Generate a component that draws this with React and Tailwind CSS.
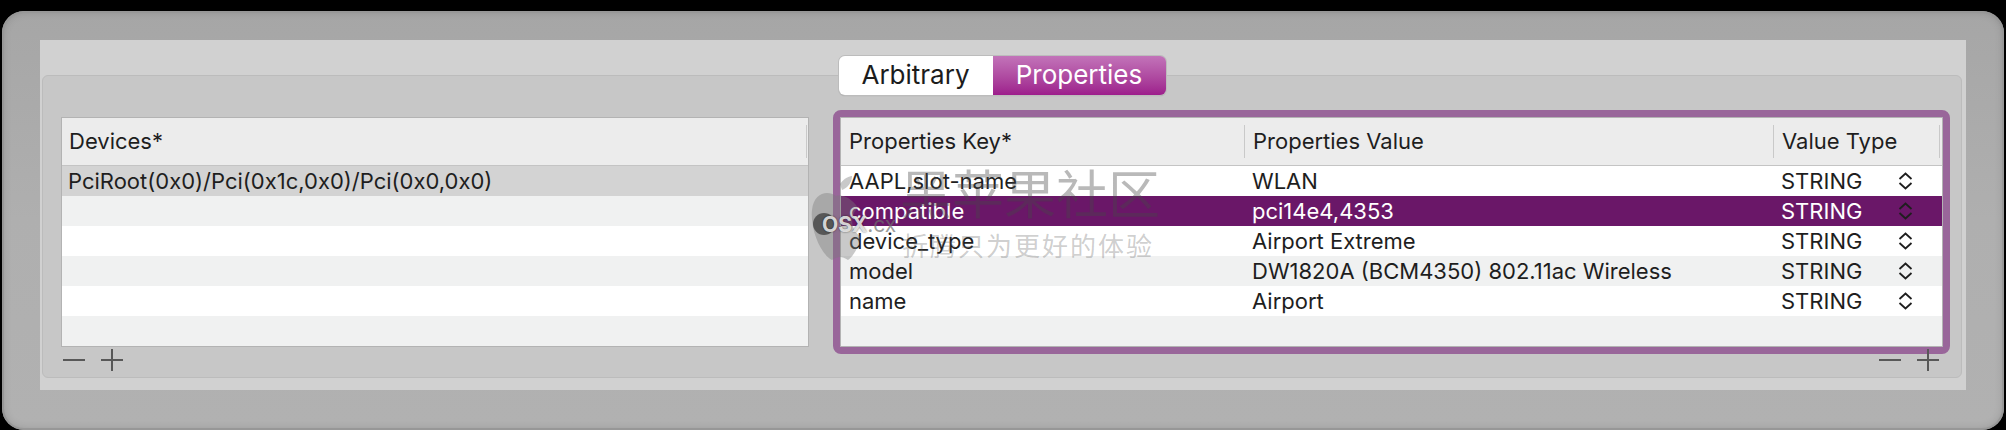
import React from 'react';

const DEVICES = ['PciRoot(0x0)/Pci(0x1c,0x0)/Pci(0x0,0x0)', '', '', '', '', ''];

const PROPS = [
    { key: 'AAPL,slot-name', value: 'WLAN', type: 'STRING' },
    { key: 'compatible', value: 'pci14e4,4353', type: 'STRING', selected: true },
    { key: 'device_type', value: 'Airport Extreme', type: 'STRING' },
    { key: 'model', value: 'DW1820A (BCM4350) 802.11ac Wireless', type: 'STRING' },
    { key: 'name', value: 'Airport', type: 'STRING' },
    null,
];

const Stepper = () => (
    <svg width="15" height="18" viewBox="0 0 15 18" className="shrink-0">
        <path d="M1.5 7 L7.5 1.5 L13.5 7 M1.5 11 L7.5 16.5 L13.5 11" fill="none" stroke="currentColor" strokeWidth="1.8" />
    </svg>
);

const AddRemove = ({ className = '' }) => (
    <div className={`flex h-[26px] items-center gap-[16px] ${className}`}>
        <svg width="22" height="22" viewBox="0 0 22 22">
            <path d="M0 11H22" stroke="#585858" strokeWidth="2" />
        </svg>
        <svg width="22" height="22" viewBox="0 0 22 22">
            <path d="M0 11H22 M11 0V22" stroke="#585858" strokeWidth="2" />
        </svg>
    </div>
);

const HeaderSep = () => <div className="h-[33px] w-px shrink-0 bg-[#c9c9c9]" />;

const App = () => {
    return (
        <div className="relative h-[430px] w-[2006px] overflow-hidden bg-black px-[2px] pt-[11px] font-['Inter',sans-serif] text-[#1e1e1e]">

            {/* ── window frame ── */}
            <div className="flex h-[419px] flex-col rounded-[22px] bg-gradient-to-b from-[#a6a6a6] via-[#afafaf] to-[#b1b1b1] px-[38px] pt-[29px] pb-[40px] shadow-[inset_0_0_0_2px_#979797,inset_0_0_10px_rgba(0,0,0,0.18)]">

                {/* ── inner panel ── */}
                <div className="flex flex-1 flex-col items-center bg-[#d1d1d1] pt-[16px] pb-[12px] pl-[2px] pr-[4px]">

                    {/* segmented control */}
                    <div className="relative z-10 flex h-[39px] overflow-hidden rounded-[6px] text-[26px] leading-none shadow-[0_0_0_1px_#bcbcbc,0_1px_1px_rgba(0,0,0,0.25)]">
                        <div className="flex w-[154px] items-center justify-center bg-white pb-[2px] text-[#1c1c1c]">Arbitrary</div>
                        <div className="flex w-[173px] items-center justify-center bg-gradient-to-b from-[#c273b9] to-[#9d1d8c] pb-[2px] text-white">Properties</div>
                    </div>

                    {/* tab box */}
                    <div className="-mt-[20px] flex w-full flex-1 flex-col rounded-[6px] border border-[#bcbcbc] bg-[#c7c7c7] px-[18px] pt-[41px] pb-[4px]">
                        <div className="flex gap-[31px]">

                            {/* devices */}
                            <div className="flex w-[748px] shrink-0 flex-col">
                                <div className="border border-[#b3b3b3] bg-white text-[22px]">
                                    <div className="flex h-[48px] items-center border-b border-[#c4c4c4] bg-[#ececec]">
                                        <span className="flex-1 pl-[7px]">Devices*</span>
                                        <HeaderSep />
                                        <div className="w-px" />
                                    </div>
                                    {DEVICES.map((d, i) => (
                                        <div
                                            key={i}
                                            className={`flex h-[30px] items-center pl-[6px] ${i === 0 ? 'bg-[#d3d3d3]' : i % 2 === 1 ? 'bg-[#f0f1f1]' : 'bg-white'}`}
                                        >
                                            {d}
                                        </div>
                                    ))}
                                </div>
                                <AddRemove className="pl-[2px]" />
                            </div>

                            {/* properties */}
                            <div className="flex flex-1 flex-col">
                                <div className="rounded-[1px] border border-[#b3b3b3] bg-white text-[22px] outline-[7px] outline-solid outline-[#99669a]">
                                    <div className="flex h-[48px] items-center border-b border-[#c4c4c4] bg-[#ececec]">
                                        <span className="w-[403px] shrink-0 pl-[8px]">Properties Key*</span>
                                        <HeaderSep />
                                        <span className="w-[528px] shrink-0 pl-[8px]">Properties Value</span>
                                        <HeaderSep />
                                        <span className="flex-1 pl-[8px]">Value Type</span>
                                        <HeaderSep />
                                        <div className="w-[2px]" />
                                    </div>
                                    {PROPS.map((p, i) => (
                                        <div
                                            key={i}
                                            className={`flex h-[30px] items-center ${p && p.selected ? 'bg-[#6a1768] text-white' : i % 2 === 1 ? 'bg-[#f0f1f1]' : 'bg-white'}`}
                                        >
                                            {p && (
                                                <>
                                                    <span className="w-[404px] shrink-0 pl-[8px]">{p.key}</span>
                                                    <span className="w-[529px] shrink-0 pl-[7px]">{p.value}</span>
                                                    <span className="w-[124px] shrink-0 pl-[7px]">{p.type}</span>
                                                    <span className="text-[#1e1e1e]"><Stepper /></span>
                                                </>
                                            )}
                                        </div>
                                    ))}
                                </div>
                                <AddRemove className="justify-end pr-[4px]" />
                            </div>
                        </div>
                    </div>
                </div>
            </div>

            {/* ── watermark overlay ── */}
            <div className="pointer-events-none absolute left-[806px] top-[166px] font-['Noto_Sans_CJK_SC',sans-serif]">
                <svg width="52" height="98" viewBox="0 0 52 98" className="absolute left-[4px] top-[10px] opacity-40">
                    <path d="M30 8 C34 2 40 0 42 0 C42 6 38 12 32 14 Z M26 20 C18 14 4 16 2 34 C0 52 10 78 22 84 C28 80 32 80 38 84 C46 78 50 66 50 60 C40 54 40 38 48 32 C42 22 32 18 26 20 Z" fill="#7a7a7a" />
                </svg>
                <div className="absolute left-[94px] top-0 whitespace-nowrap text-[52px] leading-none text-[rgba(70,70,70,0.38)]">黑苹果社区</div>
                <div className="absolute left-[96px] top-[66px] whitespace-nowrap text-[26px] leading-none tracking-[2px] text-[rgba(90,90,90,0.3)]">折腾只为更好的体验</div>
                <div className="absolute left-[7px] top-[47px] flex items-center whitespace-nowrap font-['Inter',sans-serif] text-[21px] font-bold leading-none">
                    <span className="mr-[1px] h-[22px] w-[22px] rounded-full bg-[rgba(60,60,60,0.75)]" />
                    <span className="-ml-[14px] text-[rgba(235,235,235,0.9)] [text-shadow:0_0_2px_rgba(0,0,0,0.6)]">OSX</span>
                    <span className="font-normal text-[rgba(110,110,110,0.7)]">.cx</span>
                </div>
            </div>
        </div>
    );
};

export default App;
